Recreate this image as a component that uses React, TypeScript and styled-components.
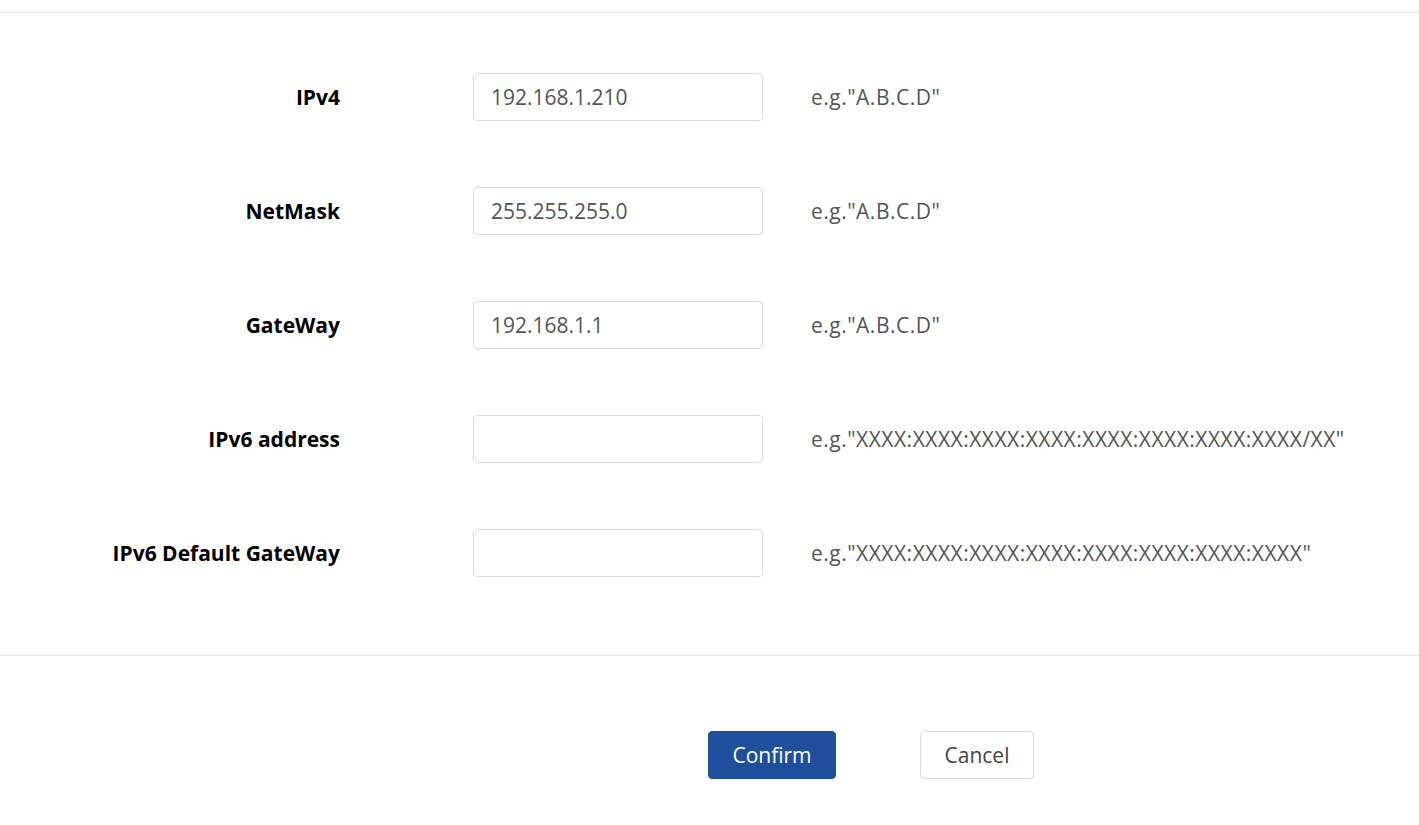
import styled, { createGlobalStyle } from "styled-components";

const GlobalStyle = createGlobalStyle`
  body {
    margin: 0;
    background: #fff;
    font-family: "Open Sans", "Noto Sans", Arial, sans-serif;
  }
`;

const Page = styled.div`
  padding-top: 12px;
`;

const Form = styled.div`
  border-top: 1px solid #e5e5e5;
  border-bottom: 1px solid #e5e5e5;
  padding: 60px 0 78px;
  display: flex;
  flex-direction: column;
  gap: 66px;
`;

const Row = styled.div`
  display: grid;
  grid-template-columns: 340px 290px auto;
  align-items: center;
  height: 48px;
`;

const Label = styled.label`
  text-align: right;
  font-size: 21px;
  font-weight: 700;
  color: #000;
`;

const Input = styled.input`
  box-sizing: border-box;
  width: 290px;
  height: 48px;
  margin-left: 133px;
  border: 1px solid #dcdcdc;
  border-radius: 4px;
  padding: 0 17px;
  font-family: inherit;
  font-size: 21px;
  color: #555;
  outline: none;
`;

const Hint = styled.span`
  margin-left: 181px;
  font-size: 21px;
  letter-spacing: 0.5px;
  color: #555;
  white-space: nowrap;
`;

const Actions = styled.div`
  display: flex;
  gap: 84px;
  padding: 75px 0 0 708px;
`;

const Button = styled.button<{ $primary?: boolean }>`
  box-sizing: border-box;
  height: 48px;
  width: ${(p) => (p.$primary ? "128px" : "114px")};
  border-radius: 4px;
  font-family: inherit;
  font-size: 21px;
  border: 1px solid ${(p) => (p.$primary ? "#1f4e9c" : "#dcdcdc")};
  background: ${(p) => (p.$primary ? "#1f4e9c" : "#fff")};
  color: ${(p) => (p.$primary ? "#fff" : "#444")};
  box-shadow: 0 2px 0 rgba(0, 0, 0, 0.02);
  cursor: pointer;
`;

const fields = [
  { label: "IPv4", value: "192.168.1.210", hint: 'e.g."A.B.C.D"' },
  { label: "NetMask", value: "255.255.255.0", hint: 'e.g."A.B.C.D"' },
  { label: "GateWay", value: "192.168.1.1", hint: 'e.g."A.B.C.D"' },
  {
    label: "IPv6 address",
    value: "",
    hint: 'e.g."XXXX:XXXX:XXXX:XXXX:XXXX:XXXX:XXXX:XXXX/XX"',
  },
  {
    label: "IPv6 Default GateWay",
    value: "",
    hint: 'e.g."XXXX:XXXX:XXXX:XXXX:XXXX:XXXX:XXXX:XXXX"',
  },
];

export default function App() {
  return (
    <Page>
      <GlobalStyle />
      <Form>
        {fields.map((f) => (
          <Row key={f.label}>
            <Label>{f.label}</Label>
            <Input defaultValue={f.value} />
            <Hint>{f.hint}</Hint>
          </Row>
        ))}
      </Form>
      <Actions>
        <Button $primary>Confirm</Button>
        <Button>Cancel</Button>
      </Actions>
    </Page>
  );
}
